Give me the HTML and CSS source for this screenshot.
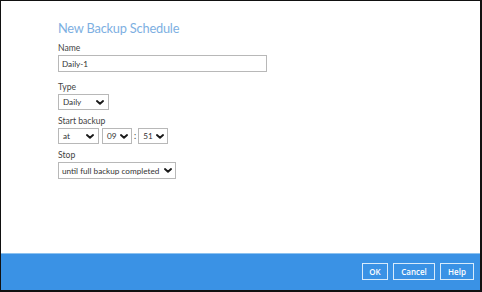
FILE: index.html
```html
<!DOCTYPE html>
<html lang="en">

<head>
    <meta charset="UTF-8">
    <meta name="viewport" content="width=device-width, initial-scale=1.0">
    <title>New Backup Schedule</title>
    <link rel="stylesheet" href="styles.css">
</head>

<body>
    <div class="dialog">
        <div class="dialog-body">
            <h1 class="dialog-title">New Backup Schedule</h1>

            <div class="field field-name">
                <label for="name">Name</label>
                <input type="text" id="name" class="text-input" value="Daily-1">
            </div>

            <div class="field">
                <label>Type</label>
                <div class="select select-type">
                    <span>Daily</span>
                    <svg class="chevron" viewBox="0 0 10 6"><path d="M1.2 1.2l3.8 3.4 3.8-3.4" /></svg>
                </div>
            </div>

            <div class="field">
                <label>Start backup</label>
                <div class="time-row">
                    <div class="select select-at">
                        <span>at</span>
                        <svg class="chevron" viewBox="0 0 10 6"><path d="M1.2 1.2l3.8 3.4 3.8-3.4" /></svg>
                    </div>
                    <div class="select select-num">
                        <span>09</span>
                        <svg class="chevron" viewBox="0 0 10 6"><path d="M1.2 1.2l3.8 3.4 3.8-3.4" /></svg>
                    </div>
                    <span class="colon">:</span>
                    <div class="select select-num">
                        <span>51</span>
                        <svg class="chevron" viewBox="0 0 10 6"><path d="M1.2 1.2l3.8 3.4 3.8-3.4" /></svg>
                    </div>
                </div>
            </div>

            <div class="field">
                <label>Stop</label>
                <div class="select select-stop">
                    <span>until full backup completed</span>
                    <svg class="chevron" viewBox="0 0 10 6"><path d="M1.2 1.2l3.8 3.4 3.8-3.4" /></svg>
                </div>
            </div>
        </div>

        <div class="dialog-footer">
            <button class="btn btn-ok">OK</button>
            <button class="btn btn-cancel">Cancel</button>
            <button class="btn btn-help">Help</button>
        </div>
    </div>
</body>

</html>
```

FILE: styles.css
```css
* {
    box-sizing: border-box;
}

body {
    margin: 0;
    background-color: #fff;
    font-family: Lato, "Open Sans", sans-serif;
}

.dialog {
    width: 482px;
    height: 292px;
    display: flex;
    flex-direction: column;
    border-top: 1px solid #111;
    border-left: 1px solid #111;
    border-right: 2px solid #111;
    border-bottom: 2px solid #111;
    background-color: #fff;
}

.dialog-body {
    flex: 1;
    padding: 17px 0 0 57px;
}

.dialog-title {
    margin: 0 0 4px;
    font-size: 12.8px;
    font-weight: 400;
    line-height: 20px;
    letter-spacing: -0.2px;
    color: #7dafe2;
}

.field {
    display: flex;
    flex-direction: column;
    align-items: flex-start;
    margin-bottom: 5px;
}

.field-name {
    margin-bottom: 9px;
}

.field label {
    font-size: 8.6px;
    line-height: 12px;
    color: #444;
    margin-bottom: 1px;
}

.text-input {
    width: 209px;
    height: 17px;
    padding: 0 3px;
    border: 1px solid #b8b8b8;
    font-family: inherit;
    font-size: 8.2px;
    color: #333;
    outline: none;
}

.select {
    display: flex;
    align-items: center;
    justify-content: space-between;
    height: 16px;
    padding: 0 4px;
    border: 1px solid #b8b8b8;
    font-size: 8.2px;
    color: #333;
    white-space: nowrap;
}

.select-type {
    width: 51px;
}

.select-at {
    width: 41px;
}

.select-num {
    width: 30px;
    padding: 0 3px 0 4px;
}

.select-stop {
    width: 118px;
    height: 17px;
    padding: 0 3px 0 3px;
}

.chevron {
    width: 8px;
    height: 5px;
    fill: none;
    stroke: #1a1a1a;
    stroke-width: 2.4;
    stroke-linecap: round;
    stroke-linejoin: round;
}

.time-row {
    display: flex;
    align-items: center;
    gap: 3px;
}

.colon {
    font-size: 8.5px;
    color: #333;
    margin: 0 -1px;
}

.dialog-footer {
    height: 37px;
    display: flex;
    align-items: center;
    justify-content: flex-end;
    gap: 5px;
    padding-right: 6px;
    padding-bottom: 1px;
    background-color: #3a92e5;
    border-top: 1px solid #8cc2f0;
}

.btn {
    height: 17px;
    padding: 0;
    border: 1px solid #d8ebfb;
    background-color: #3a92e5;
    color: #fff;
    font-family: "Open Sans", sans-serif;
    font-size: 8px;
    font-weight: 600;
}

.btn-ok {
    width: 26px;
}

.btn-cancel {
    width: 42px;
}

.btn-help {
    width: 34px;
}
```
